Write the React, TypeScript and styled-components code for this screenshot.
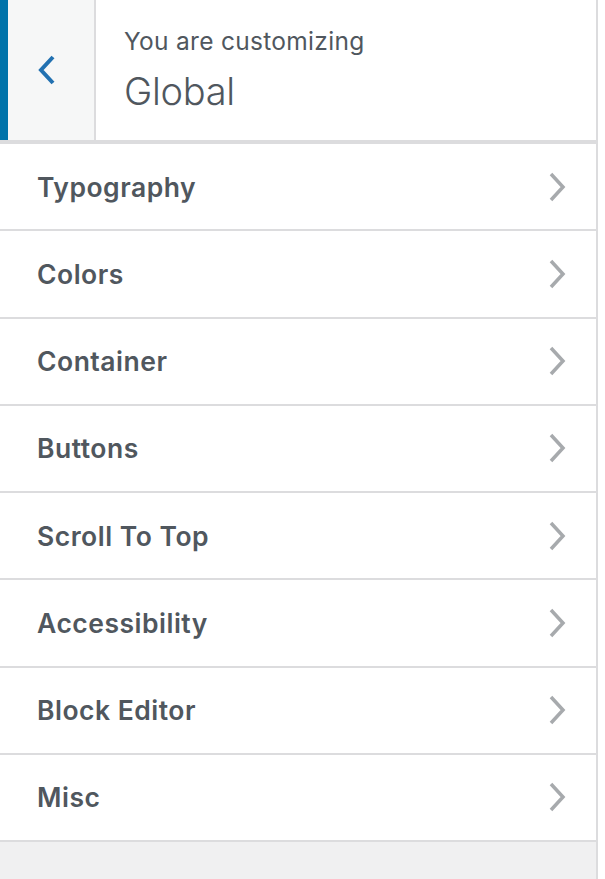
import styled, { createGlobalStyle } from 'styled-components';

const GlobalStyle = createGlobalStyle`
  html, body {
    margin: 0;
    padding: 0;
    background: #ffffff;
  }
  body {
    font-family: Inter, 'Noto Sans', 'Liberation Sans', sans-serif;
  }
`;

const Page = styled.div`
  display: flex;
  height: 879px;
  background: #ffffff;
`;

const Panel = styled.div`
  width: 596px;
  display: flex;
  flex-direction: column;
  background: #f0f0f1;
  border-right: 2px solid #dcdcde;
`;

const Header = styled.div`
  display: flex;
  height: 140px;
  background: #ffffff;
  border-bottom: 4px solid #dcdcde;
`;

const BackButton = styled.button`
  box-sizing: border-box;
  width: 96px;
  flex-shrink: 0;
  display: flex;
  align-items: center;
  justify-content: center;
  padding: 0 8px 0 0;
  background: #f6f7f7;
  border: none;
  border-left: 8px solid #0073aa;
  border-right: 2px solid #dcdcde;
  cursor: pointer;
`;

const Title = styled.div`
  display: flex;
  flex-direction: column;
  padding: 25px 0 0 28px;
  color: #50575e;
`;

const Eyebrow = styled.span`
  font-size: 24.5px;
  line-height: 32px;
  letter-spacing: 0.3px;
`;

const Heading = styled.span`
  font-size: 38px;
  font-weight: 300;
  line-height: 50px;
  margin-top: 9px;
  letter-spacing: -0.3px;
`;

const List = styled.ul`
  list-style: none;
  margin: 0;
  padding: 0;
  background: #ffffff;
`;

const Row = styled.li`
  height: 85.25px;
  display: flex;
  align-items: center;
  justify-content: space-between;
  padding: 0 30px 0 37px;
  border-bottom: 2px solid #dcdcde;
  color: #50575e;
  font-size: 26.5px;
  font-weight: 600;
  letter-spacing: 0.5px;
  cursor: pointer;
`;

const sections = [
  'Typography',
  'Colors',
  'Container',
  'Buttons',
  'Scroll To Top',
  'Accessibility',
  'Block Editor',
  'Misc',
];

function Chevron({ left, color }: { left?: boolean; color: string }) {
  return (
    <svg width="18" height="30" viewBox="0 0 18 30">
      <path
        d={left ? 'M15 2 L3 15 L15 28' : 'M3 2 L15 15 L3 28'}
        fill="none"
        stroke={color}
        strokeWidth={left ? 4 : 3.5}
      />
    </svg>
  );
}

export default function App() {
  return (
    <>
      <GlobalStyle />
      <Page>
        <Panel>
          <Header>
            <BackButton aria-label="Back">
              <Chevron left color="#2271b1" />
            </BackButton>
            <Title>
              <Eyebrow>You are customizing</Eyebrow>
              <Heading>Global</Heading>
            </Title>
          </Header>
          <List>
            {sections.map((name) => (
              <Row key={name}>
                <span>{name}</span>
                <Chevron color="#a7aaad" />
              </Row>
            ))}
          </List>
        </Panel>
      </Page>
    </>
  );
}
